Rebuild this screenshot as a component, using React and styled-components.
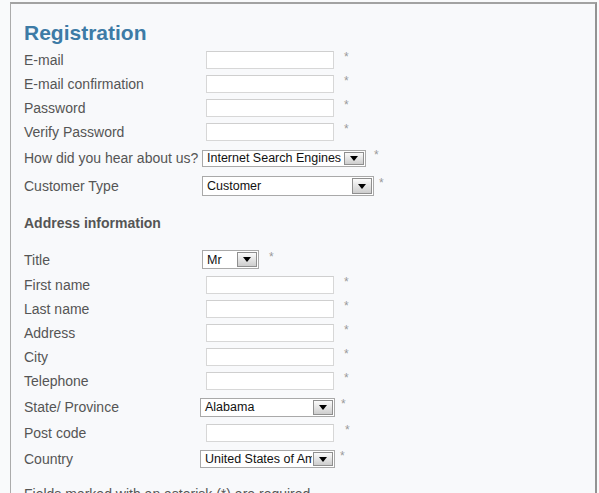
import React from "react";
import styled, { createGlobalStyle } from "styled-components";

const GlobalStyle = createGlobalStyle`
  html, body {
    margin: 0;
    padding: 0;
    background: #f9fafb;
    font-family: "Liberation Sans", Arial, sans-serif;
    overflow: hidden;
  }
`;

const Panel = styled.div`
  box-sizing: border-box;
  width: 587px;
  margin: 2px 0 0 10px;
  border-top: 2px solid #a2a2a2;
  border-left: 1px solid #ababab;
  border-right: 2px solid #939393;
  background: #f8f9fb;
  padding: 17px 0 30px 13px;
`;

const Title = styled.h1`
  margin: 0 0 3px 0;
  font-size: 21px;
  line-height: 24px;
  height: 24px;
  font-weight: bold;
  color: #3d7ba6;
`;

const Row = styled.div`
  display: flex;
  align-items: center;
  height: ${(p) => p.$h}px;
`;

const Label = styled.label`
  flex: none;
  width: 178px;
  font-size: 14px;
  color: #555;
  white-space: nowrap;
`;

const TextInput = styled.input`
  box-sizing: border-box;
  margin: 0 0 0 4px;
  width: 128px;
  height: 18px;
  padding: 0 3px;
  border: 1px solid #d7d7d7;
  border-top-color: #cfcfcf;
  background: #fff;
  outline: none;
`;

const Required = styled.span`
  margin-left: ${(p) => p.$gap}px;
  font-size: 12px;
  line-height: 12px;
  color: #9a9a9a;
  align-self: center;
  margin-top: -6px;
`;

const SelectBox = styled.div`
  box-sizing: border-box;
  display: flex;
  margin-left: ${(p) => p.$offset}px;
  width: ${(p) => p.$w}px;
  height: ${(p) => p.$ht}px;
  border: 1px solid #a9a9a9;
  background: #fff;
`;

const SelectText = styled.span`
  flex: 1;
  min-width: 0;
  display: flex;
  align-items: center;
  padding-left: ${(p) => p.$pad}px;
  font-size: 12.5px;
  color: #111;
  white-space: nowrap;
  overflow: hidden;
`;

const DropButton = styled.span`
  box-sizing: border-box;
  flex: none;
  width: 20px;
  margin: 1px;
  display: flex;
  align-items: center;
  justify-content: center;
  border: 1px solid #8f8f8f;
  background: linear-gradient(#fbfbfb, #cdcdcd);
`;

const SectionHeading = styled.div`
  display: flex;
  align-items: center;
  height: 46px;
  font-size: 14px;
  font-weight: bold;
  color: #555;
`;

const Footer = styled.p`
  margin: 13px 0 0 0;
  font-size: 14px;
  line-height: 16px;
  color: #555;
`;

const Arrow = () => (
  <svg width="8" height="5" viewBox="0 0 8 5">
    <path d="M0 0 H8 L4 5 Z" fill="#000" />
  </svg>
);

const Select = ({ value, w, ht, offset, pad = 4 }) => (
  <SelectBox $w={w} $ht={ht} $offset={offset}>
    <SelectText $pad={pad}>{value}</SelectText>
    <DropButton>
      <Arrow />
    </DropButton>
  </SelectBox>
);

const InputRow = ({ label, gap = 10 }) => (
  <Row $h={24}>
    <Label>{label}</Label>
    <TextInput type="text" />
    <Required $gap={gap}>*</Required>
  </Row>
);

const SelectRow = ({ label, h, value, w, ht, offset, gap, pad }) => (
  <Row $h={h}>
    <Label>{label}</Label>
    <Select value={value} w={w} ht={ht} offset={offset} pad={pad} />
    <Required $gap={gap}>*</Required>
  </Row>
);

export default function App() {
  return (
    <>
      <GlobalStyle />
      <Panel>
        <Title>Registration</Title>
        <InputRow label="E-mail" />
        <InputRow label="E-mail confirmation" />
        <InputRow label="Password" />
        <InputRow label="Verify Password" />
        <SelectRow
          label="How did you hear about us?"
          h={28}
          value="Internet Search Engines"
          w={164}
          ht={17}
          offset={0}
          gap={8}
          pad={4}
        />
        <SelectRow
          label="Customer Type"
          h={28}
          value="Customer"
          w={172}
          ht={20}
          offset={0}
          gap={5}
          pad={4}
        />
        <SectionHeading>Address information</SectionHeading>
        <Row $h={27}>
          <Label>Title</Label>
          <Select value="Mr" w={57} ht={19} offset={0} pad={4} />
          <Required $gap={10}>*</Required>
        </Row>
        <InputRow label="First name" />
        <InputRow label="Last name" />
        <InputRow label="Address" />
        <InputRow label="City" />
        <InputRow label="Telephone" />
        <SelectRow
          label="State/ Province"
          h={28}
          value="Alabama"
          w={135}
          ht={19}
          offset={-2}
          gap={6}
          pad={4}
        />
        <InputRow label="Post code" gap={11} />
        <SelectRow
          label="Country"
          h={28}
          value="United States of America"
          w={135}
          ht={18}
          offset={-2}
          gap={5}
          pad={4}
        />
        <Footer>Fields marked with an asterisk (*) are required.</Footer>
      </Panel>
    </>
  );
}
